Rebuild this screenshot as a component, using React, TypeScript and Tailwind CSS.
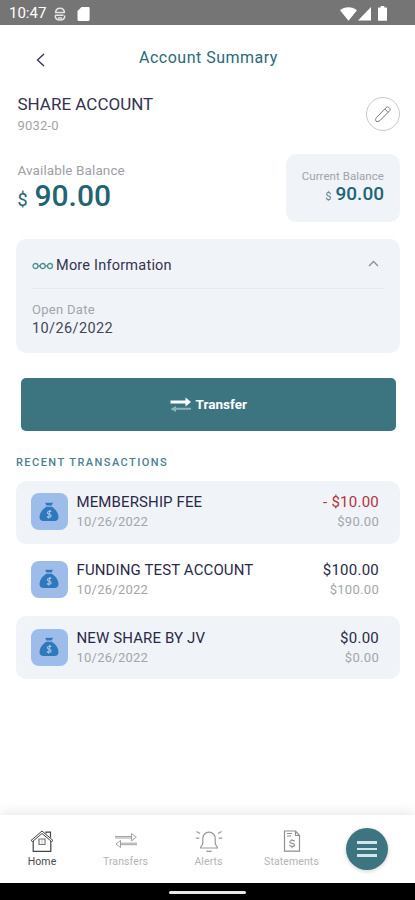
const transactions = [
  { title: "MEMBERSHIP FEE", date: "10/26/2022", amount: "- $10.00", balance: "$90.00", debit: true, shaded: true },
  { title: "FUNDING TEST ACCOUNT", date: "10/26/2022", amount: "$100.00", balance: "$100.00", debit: false, shaded: false },
  { title: "NEW SHARE BY JV", date: "10/26/2022", amount: "$0.00", balance: "$0.00", debit: false, shaded: true },
];

const StatusBar = () => {
  return (
    <div className="h-[25px] shrink-0 bg-[#757575] flex items-center justify-between pl-[9px] pr-[28.5px] pt-[2px] text-white">
      <div className="flex items-center">
        <span className="w-[38px] text-[15px] leading-none whitespace-nowrap">10:47</span>
        <svg className="ml-[7px]" width="12" height="14" viewBox="0 0 12 14" fill="none" stroke="#e4e4e4" strokeWidth="1.5">
          <path d="M1.500 5.500C1.800 3 3.500 1.200 6 1.200s4.200 1.800 4.500 4.300M1.200 8.500c0 2.800 2 4.500 4.800 4.500s4.800-1.700 4.800-4.500" />
          <path d="M1 5.500h10M1 8.300h8.500M4 11h4" strokeWidth="1.400" />
        </svg>
        <svg className="ml-[11px]" width="13" height="14" viewBox="0 0 13 14" fill="#fff">
          <path d="M4.500 0H11.500A1.200 1.200 0 0 1 12.600 1.200V12.800A1.200 1.200 0 0 1 11.500 14H1.600A1.200 1.200 0 0 1 .5 12.800V4z" />
        </svg>
      </div>
      <div className="flex items-center">
        <svg width="17" height="14" viewBox="0 0 17 14" fill="#fff">
          <path d="M0 3.300C4.500-.9 12.500-.9 17 3.300L8.500 13.800z" />
        </svg>
        <svg className="ml-px" width="13" height="14" viewBox="0 0 13 14" fill="#fff">
          <path d="M13 0v13.500H0z" />
        </svg>
        <svg className="ml-[7px]" width="9" height="15" viewBox="0 0 9 15" fill="#fff">
          <path d="M2.700 0h3.600v1.500H8.500a.5.5 0 0 1 .5.500v12.300a.5.5 0 0 1-.5.500H.5a.5.5 0 0 1-.5-.5V2a.5.5 0 0 1 .5-.5h2.200z" />
        </svg>
      </div>
    </div>
  );
};

const MoneyBag = () => {
  return (
    <div className="w-[37px] h-[37px] rounded-[8px] bg-[#9dbcea] flex items-center justify-center">
      <svg width="20" height="20" viewBox="0 0 20 20" fill="#2f78bb">
        <path d="M6 .8c1 .5 1.700-.1 2.500 0s2 .3 3.200 0 1.300.2 2.300 0L12.600 3.500H7.500z" />
        <path d="M7.200 4.800h5.700c3.300 2.200 6.600 6 6.600 10.200 0 2.800-1.600 4-4 4h-11c-2.500 0-4-1.200-4-4C.5 10.800 3.900 7 7.200 4.800z" />
        <path d="M12.300 9.700c-.8-.8-3.900-.8-3.900 1 0 2 3.700 1.200 3.700 3.100 0 1.800-3.200 1.800-4.200.7M11 7.800l-1.500 8.700" fill="none" stroke="#a3c2ea" strokeWidth="1.200" />
      </svg>
    </div>
  );
};

const Transaction = ({ item }: { item: (typeof transactions)[number] }) => {
  return (
    <div className={`h-[63.5px] rounded-[10px] flex items-center pl-[14.5px] pr-[21px] pb-px ${item.shaded ? "bg-[#f0f4f8]" : "bg-white"}`}>
      <MoneyBag />
      <div className="ml-[9px] pt-px flex-1 whitespace-nowrap">
        <p className="text-[15px] leading-[19px] tracking-[0.12px] text-[#2b2948]">{item.title}</p>
        <p className="text-[13px] leading-[19px] tracking-[0.25px] text-[#a3a5aa]">{item.date}</p>
      </div>
      <div className="pt-px text-right whitespace-nowrap">
        <p className={`text-[15px] leading-[19px] tracking-[0.25px] ${item.debit ? "text-[#b3323c]" : "text-[#2b2948]"}`}>{item.amount}</p>
        <p className="text-[13px] leading-[19px] tracking-[0.3px] text-[#a3a5aa]">{item.balance}</p>
      </div>
    </div>
  );
};

const BottomNav = () => {
  return (
    <nav className="h-[68px] shrink-0 bg-white flex items-start shadow-[0_-2px_12px_rgba(0,0,0,0.1)] text-[10.5px] leading-[14px] tracking-[0.1px] text-[#b4b4b4] text-center whitespace-nowrap">
      <div className="w-[84px] pt-[14px] flex flex-col items-center text-[#4a4a4a]">
        <svg width="24" height="24" viewBox="0 0 24 24" fill="none" stroke="#444" strokeWidth="1.200">
          <path d="M1 11.500 12 2l11 9.500-1.500 1L12 4.500 2.500 12.500z" strokeWidth="1" />
          <path d="M3.200 12v10.300h17.600V12M16 4.500V3.200h4.500v5.300" />
          <path d="M9 10h6v5.500H9z" strokeWidth="1.200" stroke="#777" />
          <path d="M12 10v5.500" strokeWidth=".6" stroke="#999" />
        </svg>
        <span className="mt-[2px]">Home</span>
      </div>
      <div className="w-[83px] pt-[14px] flex flex-col items-center">
        <svg width="24" height="24" viewBox="0 0 24 24" fill="none" stroke="#a3a3a3" strokeWidth="1">
          <path d="M1 7.500h16.500M1 9h16.500M17.500 4.500l4.800 3.700-4.800 3.700zM23 14.200H6.500M23 15.700H6.500M6.500 11.500 2 15l4.500 3.500z" />
        </svg>
        <span className="mt-[2px]">Transfers</span>
      </div>
      <div className="w-[83px] pt-[14px] flex flex-col items-center">
        <svg width="28" height="24" viewBox="0 0 28 24" fill="none" stroke="#999" strokeWidth="1.200">
          <path d="M5.500 19c0-2 2.300-2.200 2.300-5V9.500c0-3.500 2.500-6.300 6.200-6.300s6.200 2.800 6.200 6.300V14c0 2.800 2.300 3 2.300 5zM11.500 21.700c1.200 1 3.800 1 5 0" />
          <path d="M1.500 2.500 5 4.500M.800 9.200h3.500M26.500 2.500 23 4.500M27.200 9.200h-3.500" />
        </svg>
        <span className="mt-[2px]">Alerts</span>
      </div>
      <div className="w-[83px] pt-[14px] flex flex-col items-center">
        <svg width="24" height="24" viewBox="0 0 24 24" fill="none" stroke="#8f8f8f" strokeWidth="1.200">
          <path d="M4.500 2h11l4 4.500v15.700h-15zM15.500 2v4.500h4M7 4.500h5M7 7h4" />
          <path d="M14.500 12.500c-.5-1.500-4.800-1.500-4.800.4 0 2 4.900 1 4.900 3 0 2-4.500 2-5.100 0M12 10v2M12 17.300v2" strokeWidth="1.100" />
        </svg>
        <span className="mt-[2px]">Statements</span>
      </div>
      <button className="ml-[13px] mt-[13px] w-[42px] h-[42px] rounded-full bg-[#3c7580] flex flex-col items-center justify-center gap-[4px] shadow-[0_1px_4px_rgba(0,0,0,0.2)]">
        <span className="w-[20px] h-[2.5px] bg-[#d0e6ec]" />
        <span className="w-[20px] h-[2.5px] bg-[#d0e6ec]" />
        <span className="w-[20px] h-[2.5px] bg-[#d0e6ec]" />
      </button>
    </nav>
  );
};

const App = () => {
  return (
    <div className="w-full max-w-[415px] h-[900px] bg-white flex flex-col overflow-hidden font-[Roboto,sans-serif]">
      <StatusBar />
      <header className="h-[65px] shrink-0 grid grid-cols-[60px_1fr_60px] items-center">
        <svg className="ml-[35px] mt-[4px]" width="11" height="14" viewBox="0 0 11 14" fill="none" stroke="#3a3558" strokeWidth="1.400">
          <path d="M9 1 2.500 7 9 13" />
        </svg>
        <h1 className="pl-[2px] text-center text-[16px] tracking-[0.5px] text-[#2a6a78]">Account Summary</h1>
      </header>

      <main className="flex-1 pl-[16px] pr-[15px]">
        <div className="h-[64px] flex items-start justify-between">
          <div className="pl-[1.5px] pt-[3px]">
            <h2 className="text-[17px] leading-[22px] text-[#34324f]">SHARE ACCOUNT</h2>
            <p className="text-[13px] leading-[21px] tracking-[0.2px] text-[#a3a3a8]">9032-0</p>
          </div>
          <button className="mt-[7px] w-[34px] h-[34px] rounded-full border border-[#c9c9cb] flex items-center justify-center">
            <svg width="18" height="18" viewBox="0 0 18 18" fill="none" stroke="#77777c" strokeWidth="1">
              <path d="M2 16.200c-.8-1-.3-2.800.5-3.700L12.500 2.200c1.500-1.200 4.500 1.500 3.400 3.300L6 15.500c-1.200.9-2.800 1.400-4 .7zM10.800 4l3.300 3.300" />
            </svg>
          </button>
        </div>

        <div className="h-[85px] flex items-start justify-between">
          <div className="pl-[1.5px] pt-[6px]">
            <p className="text-[13.5px] leading-[20px] tracking-[0.1px] text-[#a0a0a5]">Available Balance</p>
            <p className="flex items-baseline text-[#226474]">
              <span className="w-[17px] text-[18px]">$</span>
              <span className="text-[30px] leading-[31px] font-medium">90.00</span>
            </p>
          </div>
          <div className="w-[114px] h-[68px] rounded-[10px] bg-[#f0f4f8] pt-[14px] pr-[16px] text-right">
            <p className="text-[11.5px] leading-[16px] tracking-[0.05px] text-[#a0a3a9]">Current Balance</p>
            <p className="text-[#226474] leading-[20px]">
              <span className="mr-[4px] text-[11px] text-[#5b8290]">$</span>
              <span className="text-[19px] font-medium">90.00</span>
            </p>
          </div>
        </div>

        <section className="h-[114px] rounded-[10px] bg-[#f0f4f8] px-[16px]">
          <div className="h-[50px] pt-[4px] border-b border-[#e6eaee] flex items-center">
            <svg width="22" height="8" viewBox="0 0 22 8" fill="none" stroke="#4f9390" strokeWidth="1.300">
              <circle cx="3.500" cy="4" r="2.500" />
              <circle cx="10.700" cy="4" r="2.500" />
              <circle cx="18" cy="4" r="2.500" />
              <path d="M6 4h2.300M13.200 4h2.300" />
            </svg>
            <h3 className="ml-[2px] flex-1 text-[14.5px] tracking-[0.22px] text-[#34324f]">More Information</h3>
            <svg className="mr-[5px] -mt-[4px]" width="11" height="7" viewBox="0 0 11 7" fill="none" stroke="#8b8f94" strokeWidth="1.300">
              <path d="M1 6l4.500-4.500L10 6" />
            </svg>
          </div>
          <p className="mt-[11px] text-[13px] leading-[19px] tracking-[0.3px] text-[#a3a5aa]">Open Date</p>
          <p className="text-[14.5px] leading-[19px] tracking-[0.4px] text-[#45455a]">10/26/2022</p>
        </section>

        <button className="mt-[25px] ml-[4.5px] w-[375.5px] h-[53px] rounded-[5px] bg-[#3c7580] flex items-center justify-center text-white">
          <svg width="22" height="16" viewBox="0 0 22 16">
            <path d="M.5 3.500h15V.5L21 5l-5.500 4.500v-3H.5z" fill="#fff" />
            <path d="M21 10.800H6V9L.500 12l5.500 3v-2.200h15z" fill="#8fb3ba" />
          </svg>
          <span className="ml-[4px] text-[13.5px] font-bold">Transfer</span>
        </button>

        <h4 className="mt-[24px] h-[25.5px] text-[11px] leading-[16px] font-medium tracking-[1.45px] text-[#4b8290]">RECENT TRANSACTIONS</h4>
        <div className="flex flex-col gap-[4.2px]">
          {transactions.map((item) => (
            <Transaction key={item.title} item={item} />
          ))}
        </div>
      </main>

      <BottomNav />
      <div className="h-[17px] shrink-0 bg-black flex justify-center pt-[8px]">
        <div className="w-[77px] h-[3px] rounded-full bg-[#e8e8e8]" />
      </div>
    </div>
  );
};

export default App;
